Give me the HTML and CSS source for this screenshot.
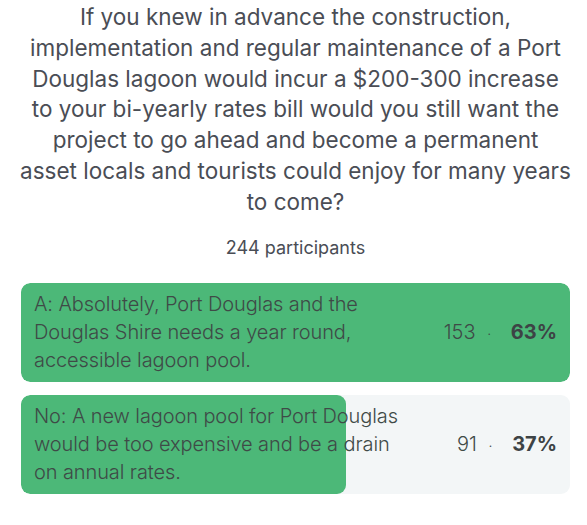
FILE: index.html
```html
<html>
<head>
<meta charset="UTF-8">
<title>Poll results</title>
<link rel="stylesheet" href="styles.css">
</head>
<body>
    <div class="poll">
        <h1 class="question">If you knew in advance the construction,<br>
            implementation and regular maintenance of a Port<br>
            Douglas lagoon would incur a $200-300 increase<br>
            to your bi-yearly rates bill would you still want the<br>
            project to go ahead and become a permanent<br>
            asset locals and tourists could enjoy for many years<br>
            to come?</h1>
        <p class="count">244 participants</p>
        <div class="options">
            <div class="option">
                <div class="bar" style="width: 100%"></div>
                <span class="label">A: Absolutely, Port Douglas and the Douglas Shire needs a year round, accessible lagoon pool.</span>
                <span class="votes">153 <span class="dot">&middot;</span> <b>63%</b></span>
            </div>
            <div class="option">
                <div class="bar" style="width: 59.2%"></div>
                <span class="label">No: A new lagoon pool for Port Douglas would be too expensive and be a drain on annual rates.</span>
                <span class="votes">91 <span class="dot">&middot;</span> <b>37%</b></span>
            </div>
        </div>
    </div>
</body>
</html>
```

FILE: styles.css
```css
body {
    margin: 0;
    background-color: #ffffff;
    color: #4a4d55;
    font-family: Inter, "Noto Sans", sans-serif;
}
.poll {
    width: 549px;
    margin-left: 21px;
}
.question {
    margin: 2px -14px 0 -14px;
    font-size: 22.5px;
    font-weight: normal;
    line-height: 30.8px;
    text-align: center;
    color: #4a4d55;
    white-space: nowrap;
}
.count {
    margin: 19px 0 0 0;
    font-size: 18px;
    text-align: center;
    color: #4a4d55;
}
.options {
    display: flex;
    flex-direction: column;
    gap: 13px;
    margin-top: 25px;
}
.option {
    position: relative;
    display: flex;
    align-items: center;
    justify-content: space-between;
    height: 99px;
    padding: 0 13px;
    background-color: #f3f6f7;
    border-radius: 9px;
    overflow: hidden;
    box-sizing: border-box;
    color: #3f4a47;
}
.bar {
    position: absolute;
    top: 0;
    left: 0;
    bottom: 0;
    background-color: #4cb878;
    border-radius: 9px;
}
.label {
    position: relative;
    width: 380px;
    font-size: 20px;
    font-weight: 300;
    line-height: 28px;
    letter-spacing: -0.1px;
}
.votes {
    position: relative;
    font-size: 20px;
    font-weight: 300;
    white-space: nowrap;
}
.dot {
    margin: 0 6px;
    font-size: 14px;
}
.votes b {
    margin-left: 8px;
    font-weight: bold;
    color: #3d4345;
}
```
